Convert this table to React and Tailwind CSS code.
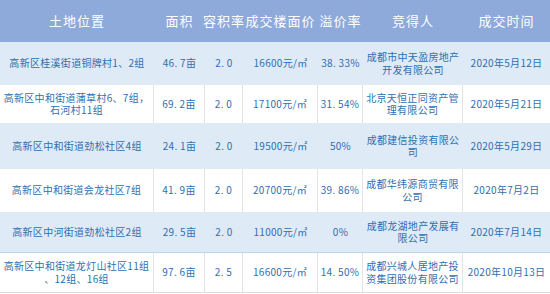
const rows = [
  { h: "h-[43px]", blue: true, loc: ["高新区桂溪街道铜牌村1、2组"], area: "46. 7亩", far: "2. 0", price: "16600元/㎡", prem: "38. 33%", winner: ["成都市中天盈房地产", "开发有限公司"], date: "2020年5月12日" },
  { h: "h-[38px]", blue: false, loc: ["高新区中和街道蒲草村6、7组，", "石河村11组"], area: "69. 2亩", far: "2. 0", price: "17100元/㎡", prem: "31. 54%", winner: ["北京天恒正同资产管", "理有限公司"], date: "2020年5月21日" },
  { h: "h-[46px]", blue: true, loc: ["高新区中和街道劲松社区4组"], area: "24. 1亩", far: "2. 0", price: "19500元/㎡", prem: "50%", winner: ["成都建信投资有限公", "司"], date: "2020年5月29日" },
  { h: "h-[43px]", blue: false, loc: ["高新区中和街道会龙社区7组"], area: "41. 9亩", far: "2. 0", price: "20700元/㎡", prem: "39. 86%", winner: ["成都华纬源商贸有限", "公司"], date: "2020年7月2日" },
  { h: "h-[41px]", blue: true, loc: ["高新区中河街道劲松社区2组"], area: "29. 5亩", far: "2. 0", price: "11000元/㎡", prem: "0%", winner: ["成都龙湖地产发展有", "限公司"], date: "2020年7月14日" },
  { h: "h-[40px]", blue: false, loc: ["高新区中和街道龙灯山社区11组", "、12组、16组"], area: "97. 6亩", far: "2. 5", price: "16600元/㎡", prem: "14. 50%", winner: ["成都兴城人居地产投", "资集团股份有限公司"], date: "2020年10月13日" },
];

const cols = "grid grid-cols-[154px_51px_38px_75px_45px_100px_87px]";

function Cell({ children, blue, last, className = "" }) {
  return (
    <div
      className={
        "flex flex-col items-center justify-center text-center whitespace-nowrap " +
        (blue || last ? "" : "border-r border-[#e4e4e4] ") +
        className
      }
    >
      {children}
    </div>
  );
}

export default function App() {
  return (
    <div
      className="w-[550px] h-[294px] overflow-hidden bg-white"
      style={{ fontFamily: '"Noto Sans CJK SC", "Noto Sans", sans-serif' }}
    >
      <div className={cols + " h-[42px] bg-[#8eaadb] text-white text-[13px] tracking-[1px] whitespace-nowrap"}>
        <div className="flex items-center justify-center">土地位置</div>
        <div className="flex items-center justify-center">面积</div>
        <div className="flex items-center justify-center">容积率</div>
        <div className="flex items-center justify-center">成交楼面价</div>
        <div className="flex items-center justify-center">溢价率</div>
        <div className="flex items-center justify-center">竞得人</div>
        <div className="flex items-center justify-center">成交时间</div>
      </div>
      {rows.map((r, i) => (
        <div
          key={i}
          className={
            cols + " " + r.h + " text-[10px] leading-[12.5px] tracking-[0.3px] text-[#2f6fb0] " +
            (r.blue ? "bg-[#deeaf6] " : "bg-white ") +
            (i === 4 ? "border-b border-[#bcd5ec] " : "") +
            (i === 5 ? "border-b border-[#dcdcdc] " : "")
          }
        >
          <Cell blue={r.blue}>
            {r.loc.map((l) => (
              <span key={l}>{l}</span>
            ))}
          </Cell>
          <Cell blue={r.blue}>{r.area}</Cell>
          <Cell blue={r.blue}>{r.far}</Cell>
          <Cell blue={r.blue}>{r.price}</Cell>
          <Cell blue={r.blue}>{r.prem}</Cell>
          <Cell blue={r.blue}>
            {r.winner.map((l) => (
              <span key={l}>{l}</span>
            ))}
          </Cell>
          <Cell blue={r.blue} last>{r.date}</Cell>
        </div>
      ))}
    </div>
  );
}
